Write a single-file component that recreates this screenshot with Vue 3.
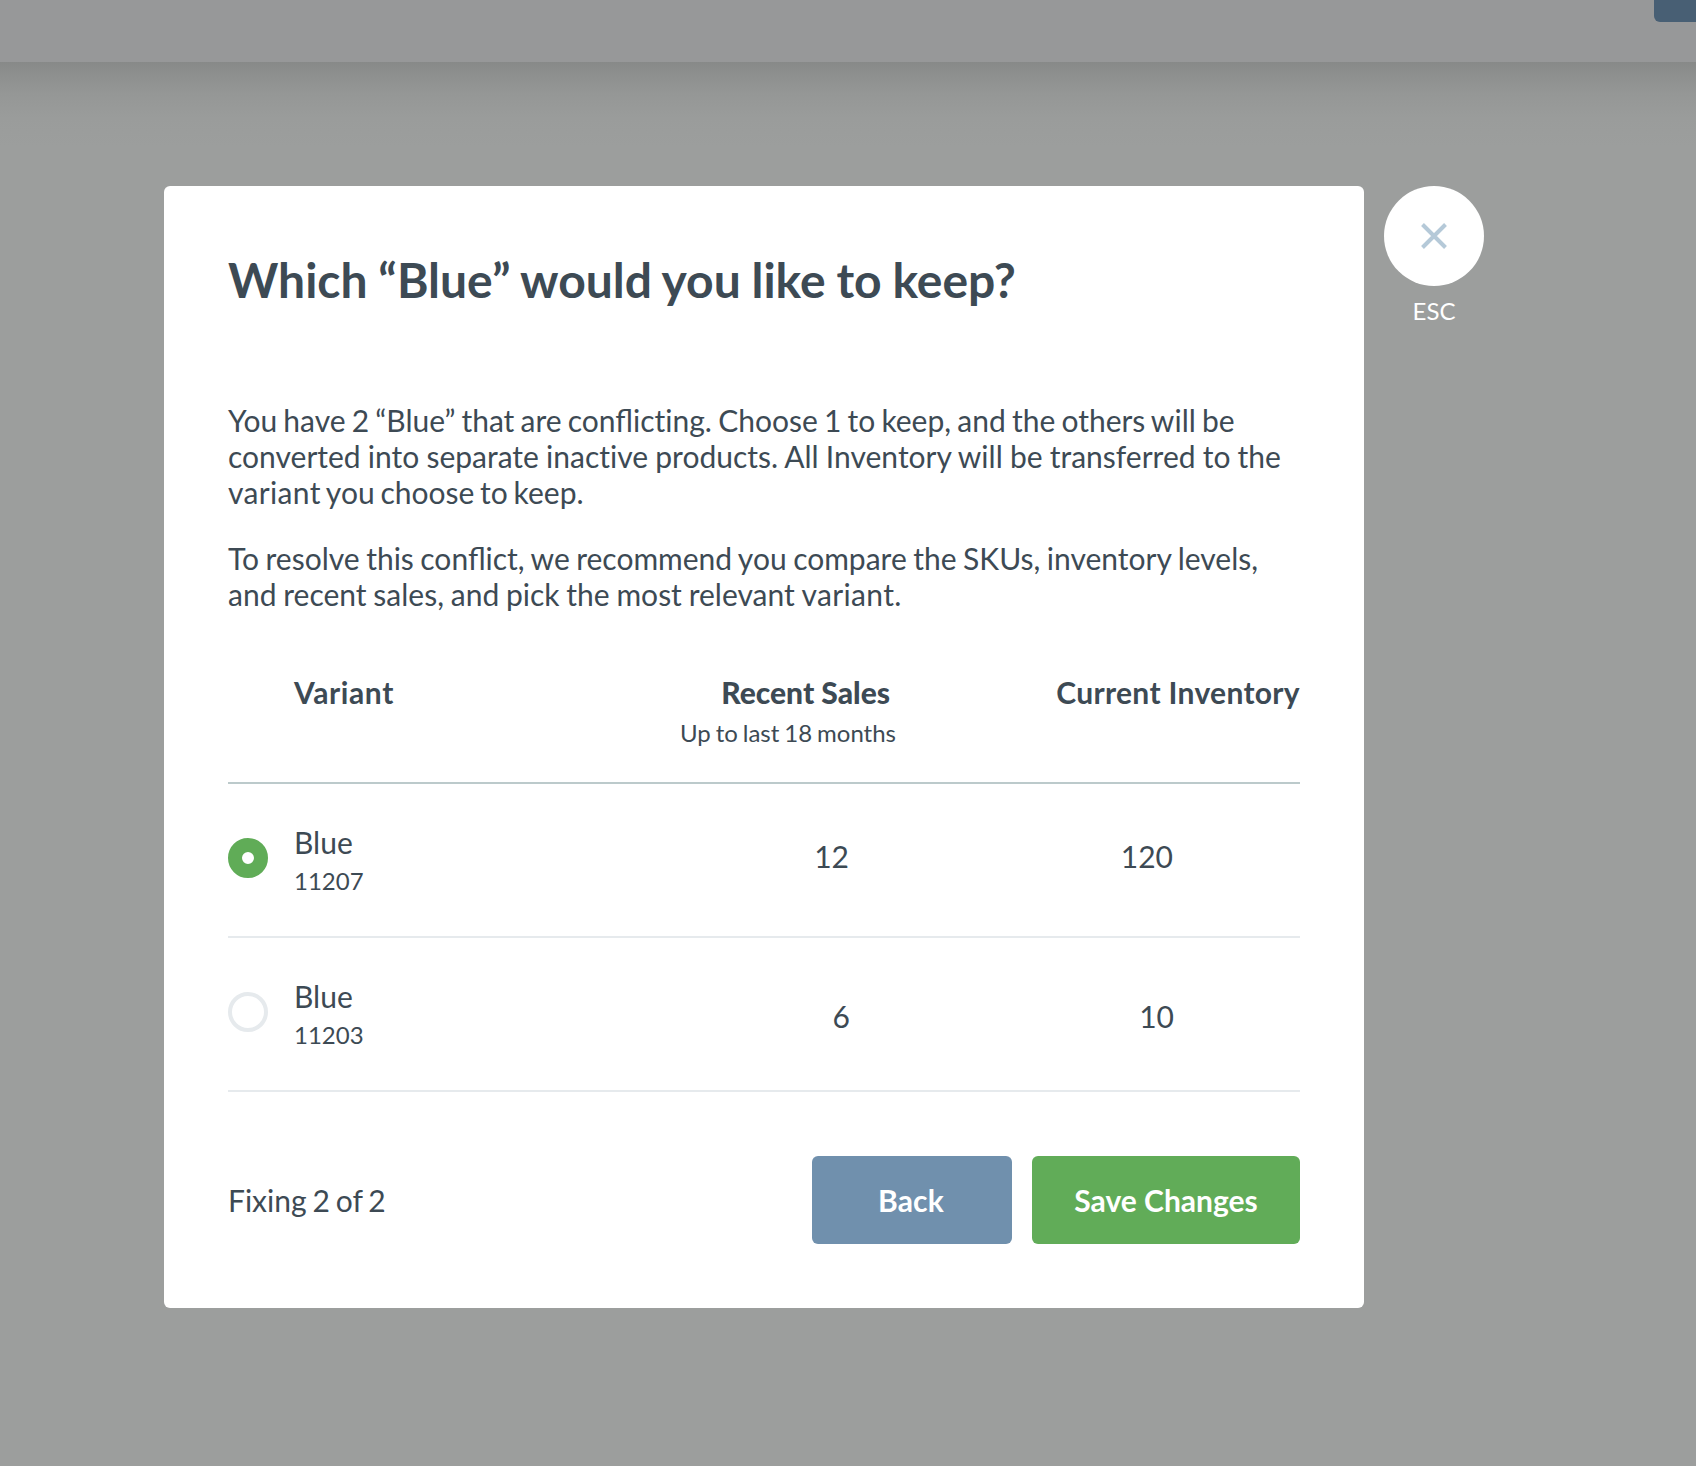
<script setup>
import { ref } from 'vue'
const variants = [
  { name: 'Blue', sku: '11207', sales: 12, inventory: 120 },
  { name: 'Blue', sku: '11203', sales: 6, inventory: 10 },
]
const selected = ref(0)
</script>

<template>
  <div class="page">
    <header class="topbar"><div class="action"></div></header>
    <div class="stage">
      <section class="modal">
        <h1>Which “Blue” would you like to keep?</h1>
        <p class="intro"><span class="l1">You have 2 “Blue” that are conflic<i>ti</i>ng. Choose 1 to keep, and the others will be</span><br /><span class="l2">converted into separate inac<i>ti</i>ve products. All Inventory will be transferred to the</span><br /><span class="l3"><i class="wide">variant</i> you choose to keep.</span></p>
        <p class="intro second"><span class="l4">To resolve this conflict, we recommend you compare the SKUs, inventory levels,</span><br /><span class="l5">and recent sales, and pick the most relevant <i class="wide">variant</i>.</span></p>
        <div class="head">
          <div class="h-variant">Variant</div>
          <div class="h-sales"><b>Recent Sales</b><span>Up to last 18 months</span></div>
          <div class="h-inv">Current Inventory</div>
        </div>
        <div v-for="(v, i) in variants" :key="v.sku" class="row" :class="{ lower: i === 1 }" @click="selected = i">
          <span class="radio" :class="{ on: selected === i }"></span>
          <div class="variant"><span class="name">{{ v.name }}</span><span class="sku">{{ v.sku }}</span></div>
          <span class="num sales">{{ v.sales }}</span>
          <span class="num inv">{{ v.inventory }}</span>
        </div>
        <footer>
          <span class="progress">Fixing 2 of 2</span>
          <button class="back">Back</button>
          <button class="save">Save Changes</button>
        </footer>
      </section>
      <aside class="close">
        <button class="circle" aria-label="Close">
          <svg width="28" height="28" viewBox="0 0 28 28"><path d="M2.5 2.5L25.5 25.5M25.5 2.5L2.5 25.5" stroke="#b5c9d8" stroke-width="4" fill="none" /></svg>
        </button>
        <span>ESC</span>
      </aside>
    </div>
  </div>
</template>

<style>
body { margin: 0; }
</style>

<style scoped>
* { box-sizing: border-box; }
.page { width: 1696px; height: 1466px; overflow: hidden; background: #9c9e9d; font-family: Lato, sans-serif; color: #3d4a54; }
.topbar { height: 62px; background: #979899; display: flex; justify-content: flex-end; }
.action { width: 42px; height: 22px; background: #485f74; border-radius: 0 0 0 6px; }
.stage { height: 1404px; padding: 124px 0 0 164px; display: flex; gap: 20px; align-items: flex-start; background: linear-gradient(#878988, #8e908f 14px, #959796 32px, #9a9c9b 56px, #9c9e9d 84px); }
.modal { width: 1200px; height: 1122px; background: #fff; border-radius: 6px; padding: 64px; display: flex; flex-direction: column; }
h1 { margin: 0; font-size: 48px; line-height: 60px; height: 152px; font-weight: 700; white-space: nowrap; word-spacing: -0.9px; }
.intro { margin: 0 0 30px; font-size: 30px; line-height: 36px; white-space: nowrap; flex: none; }
.intro i { font-style: normal; font-variant-ligatures: none; }
.intro .wide { letter-spacing: 0.35px; }
.l1 { word-spacing: -1.5px; }
.l2 { word-spacing: -0.5px; }
.l3 { word-spacing: -1.9px; }
.l4 { word-spacing: -1.2px; }
.l5 { word-spacing: -0.9px; }
.second { margin-bottom: 62px; }
.head { height: 110px; flex: none; display: flex; border-bottom: 2px solid #bccacb; font-size: 30px; line-height: 36px; font-weight: 700; }
.h-variant { width: 386px; padding-left: 66px; letter-spacing: 0.6px; }
.h-sales { width: 282px; display: flex; flex-direction: column; align-items: flex-end; }
.h-sales b { margin-right: 6px; }
.h-sales span { font-size: 24px; line-height: 30px; font-weight: 400; margin-top: 8px; white-space: nowrap; word-spacing: -1.2px; }
.h-inv { flex: 1; text-align: right; letter-spacing: 0.32px; }
.row { height: 154px; flex: none; display: flex; align-items: flex-start; border-bottom: 2px solid #e6eaed; }
.radio { width: 40px; height: 40px; margin-top: 54px; border-radius: 50%; border: 4px solid #e6eaed; }
.radio.on { border: 14px solid #60ac57; }
.variant { width: 300px; margin: 40px 0 0 26px; display: flex; flex-direction: column; }
.name { font-size: 30px; line-height: 36px; }
.sku { font-size: 24px; line-height: 30px; margin-top: 6px; }
.num { font-size: 30px; line-height: 36px; margin-top: 54px; text-align: right; }
.lower .num { margin-top: 60px; }
.sales { width: 255px; }
.inv { width: 324px; }
.lower .sales { width: 256px; }
footer { margin-top: 64px; display: flex; align-items: center; height: 88px; }
.progress { font-size: 30px; flex: 1; word-spacing: -1.8px; }
button { border: 0; padding: 0; font: 700 30px/36px Lato, sans-serif; color: #fff; }
.back { width: 200px; height: 88px; border-radius: 6px; background: #7090ad; margin-right: 20px; padding-right: 2px; letter-spacing: 0.2px; }
.save { width: 268px; height: 88px; border-radius: 6px; background: #61ac58; }
.close { width: 100px; display: flex; flex-direction: column; align-items: center; color: #fff; font-size: 24px; line-height: 30px; }
.circle { width: 100px; height: 100px; border-radius: 50%; background: #fff; display: flex; align-items: center; justify-content: center; margin-bottom: 10px; }
</style>
